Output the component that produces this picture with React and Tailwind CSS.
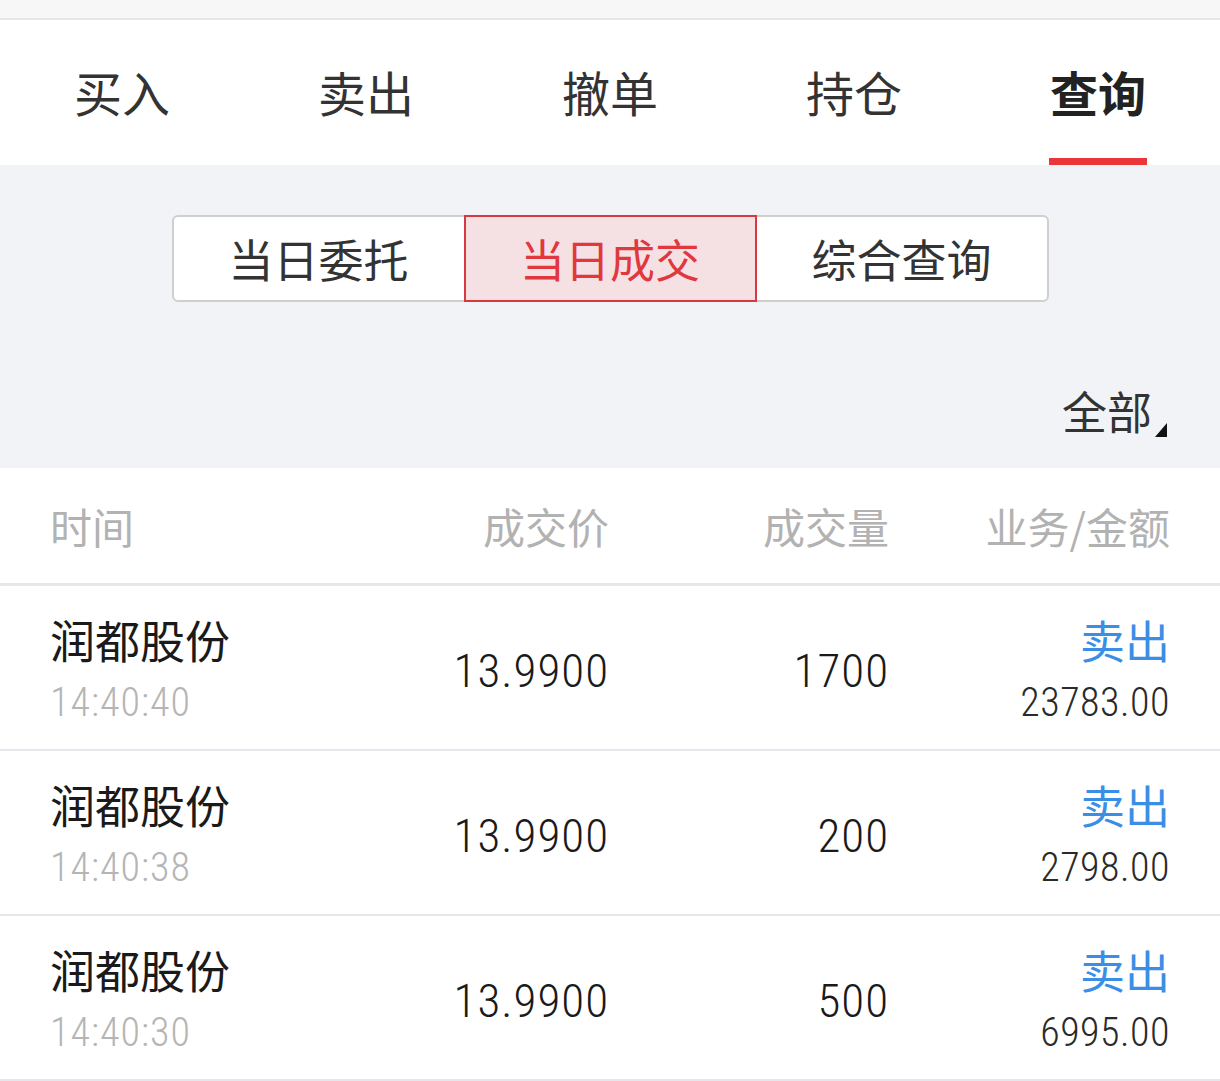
import React from "react";

const cjk = { fontFamily: '"Noto Sans CJK SC", "Noto Sans", sans-serif' };
const num = { fontFamily: '"Roboto Condensed", "Liberation Sans Narrow", Roboto, "Noto Sans CJK SC", sans-serif' };

const tabs = ["买入", "卖出", "撤单", "持仓", "查询"];
const rows = [
  { name: "润都股份", time: "14:40:40", price: "13.9900", vol: "1700", amt: "23783.00" },
  { name: "润都股份", time: "14:40:38", price: "13.9900", vol: "200", amt: "2798.00" },
  { name: "润都股份", time: "14:40:30", price: "13.9900", vol: "500", amt: "6995.00" },
];

export default function App() {
  return (
    <div className="w-[1220px] h-[1081px] overflow-hidden bg-white" style={cjk}>
      <div className="h-[20px] bg-[#f7f7f7] border-b-2 border-[#e6e6ec]" />
      <div className="grid grid-cols-5 h-[145px] bg-white">
        {tabs.map((t, i) => (
          <div key={t} className="relative flex items-center justify-center">
            <span className={`text-[48px] leading-none -mt-[3px] ${i === 4 ? "font-bold text-[#222]" : "text-[#333]"}`}>{t}</span>
            {i === 4 && <div className="absolute bottom-0 left-1/2 -translate-x-1/2 w-[98px] h-[7px] bg-[#e8363a]" />}
          </div>
        ))}
      </div>
      <div className="bg-[#f2f3f7] h-[303px] flex flex-col">
        <div className="pt-[50px] flex justify-center">
          <div className="flex w-[877px] h-[87px] border-2 border-[#cfcfcf] rounded-[6px] bg-white">
            <div className="flex-1 flex items-center justify-center text-[45px] text-[#333]">当日委托</div>
            <div className="w-[293px] -my-[2px] flex items-center justify-center text-[45px] text-[#e0383d] bg-[#f5e1e4] border-2 border-[#d6393f]">当日成交</div>
            <div className="flex-1 flex items-center justify-center text-[45px] text-[#333]">综合查询</div>
          </div>
        </div>
        <div className="flex justify-end pr-[68px] pt-[86px]">
          <div className="relative text-[45px] leading-none text-[#333]">
            全部
            <svg className="absolute -right-[15px] bottom-[-4px]" width="12" height="14" viewBox="0 0 12 14"><polygon points="12,0 12,14 0,14" fill="#111" /></svg>
          </div>
        </div>
      </div>
      <div className="h-[118px] flex items-center px-[50px] text-[42px] text-[#b2b2b2] border-b-[3px] border-[#e6e6ec]">
        <div className="w-[200px]">时间</div>
        <div className="w-[359px] text-right">成交价</div>
        <div className="w-[280px] text-right">成交量</div>
        <div className="flex-1 text-right">业务/金额</div>
      </div>
      {rows.map((r, i) => (
        <div key={i} className="h-[165px] flex items-center px-[50px] border-b-2 border-[#e6e6ec]">
          <div className="w-[200px] flex flex-col pt-[4px]">
            <div className="text-[45px] leading-none text-[#1a1a1a]">{r.name}</div>
            <div className="text-[40px] leading-none font-light tracking-[1px] text-[#b5b5b5] mt-[21px]" style={num}>{r.time}</div>
          </div>
          <div className="w-[359px] text-right text-[47px] leading-none font-light tracking-[1px] text-[#1a1a1a] pt-[6px]" style={num}>{r.price}</div>
          <div className="w-[280px] text-right text-[47px] leading-none font-light tracking-[1px] text-[#1a1a1a] pt-[6px]" style={num}>{r.vol}</div>
          <div className="flex-1 flex flex-col items-end pt-[4px]">
            <div className="text-[45px] leading-none text-[#3a8ee6]">卖出</div>
            <div className="text-[40px] leading-none font-light tracking-[0.5px] text-[#2a2a2a] mt-[21px]" style={num}>{r.amt}</div>
          </div>
        </div>
      ))}
    </div>
  );
}
